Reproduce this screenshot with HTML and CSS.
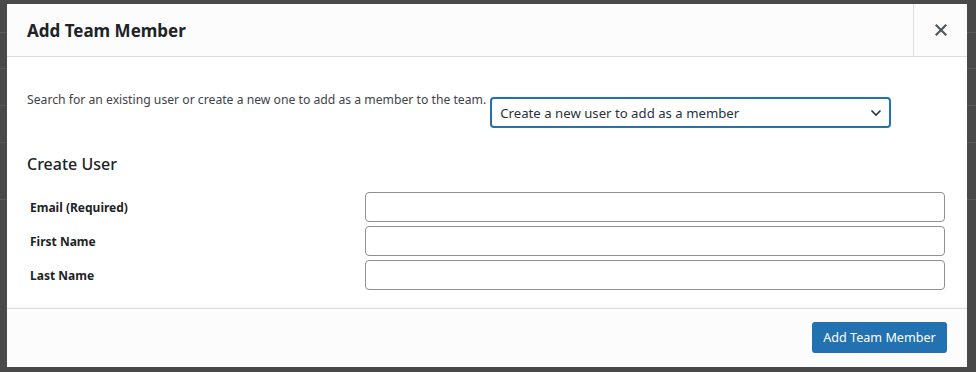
FILE: index.html
```html
<!DOCTYPE html>
<html lang="en">
<head>
    <meta charset="UTF-8">
    <title>Add Team Member</title>
    <link rel="stylesheet" href="styles.css">
</head>
<body>
    <div class="backdrop">
        <div class="bg-row" style="height: 33px"></div>
        <div class="bg-row" style="height: 36px"></div>
        <div class="bg-row" style="height: 37px"></div>
        <div class="bg-row" style="height: 37px"></div>
        <div class="bg-row" style="height: 57px"></div>
    </div>

    <div class="modal">
        <div class="modal-header">
            <h1 class="modal-title">Add Team Member</h1>
            <button class="modal-close" aria-label="Close">
                <svg width="12" height="12" viewBox="0 0 12 12">
                    <path d="M1.5 1.5 L10.5 10.5 M10.5 1.5 L1.5 10.5" stroke="#50575e" stroke-width="2.2" stroke-linecap="square"/>
                </svg>
            </button>
        </div>

        <div class="modal-body">
            <div class="search-row">
                <span class="search-text">Search for an existing user or create a new one to add as a member to the team.</span>
                <div class="select">
                    <span>Create a new user to add as a member</span>
                    <svg width="12" height="8" viewBox="0 0 12 8">
                        <path d="M1.5 1.5 L6 6 L10.5 1.5" fill="none" stroke="#2c3338" stroke-width="1.6"/>
                    </svg>
                </div>
            </div>

            <h2 class="section-title">Create User</h2>

            <div class="form-grid">
                <label>Email (Required)</label>
                <input type="text">
                <label>First Name</label>
                <input type="text">
                <label>Last Name</label>
                <input type="text">
            </div>
        </div>

        <div class="modal-footer">
            <button class="btn-primary">Add Team Member</button>
        </div>
    </div>
</body>
</html>
```

FILE: styles.css
```css
body {
    margin: 0;
    width: 976px;
    height: 372px;
    overflow: hidden;
    background-color: #494949;
    font-family: "Noto Sans", "Open Sans", sans-serif;
    color: #3c434a;
    position: relative;
}
.backdrop {
    display: flex;
    flex-direction: column;
}
.bg-row {
    border-bottom: 1px solid #5a5a5a;
    box-sizing: border-box;
}
.modal {
    position: absolute;
    left: 7px;
    top: 4px;
    width: 960px;
    height: 363px;
    background-color: #fff;
    display: flex;
    flex-direction: column;
}
.modal-header {
    height: 53px;
    box-sizing: border-box;
    display: flex;
    align-items: stretch;
    justify-content: space-between;
    background-color: #fcfcfc;
    border-bottom: 1px solid #dcdcde;
}
.modal-title {
    margin: 0;
    padding-left: 20px;
    align-self: center;
    font-size: 17px;
    font-weight: 700;
    color: #1d2327;
}
.modal-close {
    width: 54px;
    border: none;
    border-left: 1px solid #dcdcde;
    background: transparent;
    display: flex;
    align-items: center;
    justify-content: center;
    padding: 0;
}
.modal-body {
    flex: 1;
    padding: 0 22px 0 20px;
    box-shadow: inset 0 -6px 6px -6px rgba(0,0,0,0.06);
}
.search-row {
    display: flex;
    align-items: flex-start;
    gap: 4px;
    margin-top: 33px;
}
.search-text {
    font-size: 12.2px;
    line-height: 20px;
    white-space: nowrap;
}
.select {
    margin-top: 7px;
    width: 401px;
    height: 31px;
    box-sizing: border-box;
    border: 2px solid #2271b1;
    border-radius: 4px;
    display: flex;
    align-items: center;
    justify-content: space-between;
    padding: 0 7px 0 8px;
    font-size: 13.2px;
    color: #2c3338;
}
.section-title {
    margin: 24px 0 0 0;
    font-size: 16px;
    font-weight: 500;
    color: #1d2327;
    line-height: 24px;
}
.form-grid {
    display: grid;
    grid-template-columns: 338px 1fr;
    row-gap: 4px;
    margin-top: 16px;
    align-items: center;
}
.form-grid label {
    padding-left: 3px;
    font-size: 12px;
    font-weight: 700;
    color: #1d2327;
}
.form-grid input {
    height: 30px;
    box-sizing: border-box;
    border: 1px solid #8c8f94;
    border-radius: 4px;
    background: #fff;
}
.modal-footer {
    border-top: 1px solid #dcdcde;
    background-color: #fcfcfc;
    padding: 13px 20px 14px;
    display: flex;
    justify-content: flex-end;
}
.btn-primary {
    width: 135px;
    height: 31px;
    background-color: #2271b1;
    color: #fff;
    border: none;
    border-radius: 3px;
    font-family: "Noto Sans", "Open Sans", sans-serif;
    font-size: 12.6px;
}
```
